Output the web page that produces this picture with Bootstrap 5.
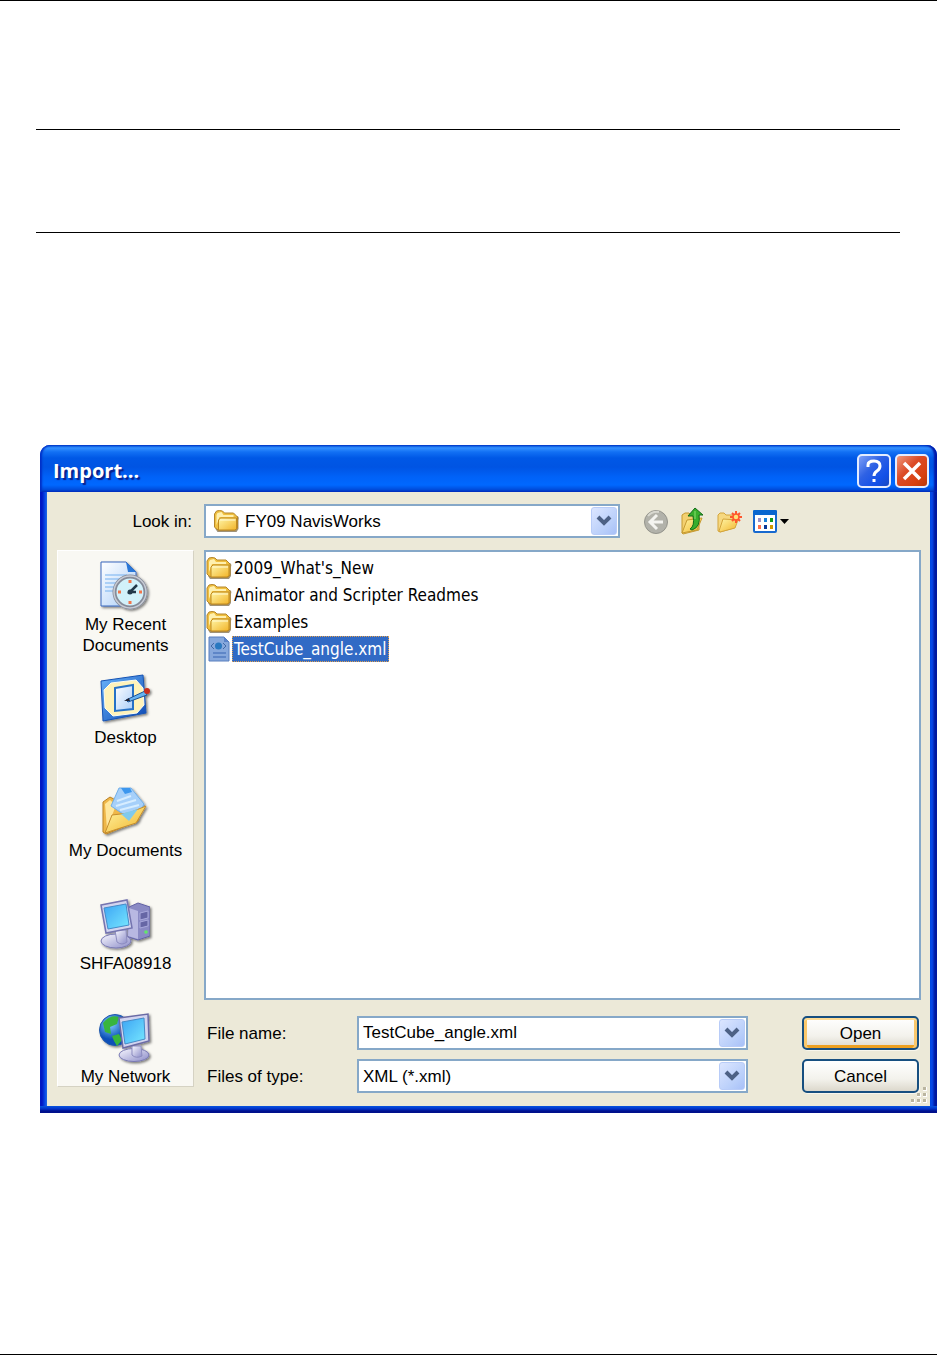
<!DOCTYPE html>
<html lang="en">
<head>
<meta charset="utf-8">
<meta name="viewport" content="width=device-width, initial-scale=1">
<title>Import</title>
<link href="https://cdn.jsdelivr.net/npm/bootstrap@5.3.0/dist/css/bootstrap.min.css" rel="stylesheet">
<style>
body { font-family: "Liberation Sans", Arial, sans-serif; font-size: 17px; line-height: 21px; color: #000; background: #fff; }
.sheet { min-height: 100vh; border-top: 1px solid #000; border-bottom: 1px solid #000; }
.note-box { height: 104px; margin: 128px 37px 212px 36px; border-top: 1px solid #000; border-bottom: 1px solid #000; }
.dialog-window { margin-left: 40px; border-radius: 10px 10px 0 0; padding: 0 7px 7px;
  background: linear-gradient(to top, #00108c 0 2px, #0030c8 4px, #0855e0 7px, transparent 7px), linear-gradient(90deg, #0018c4 0 2px, #0848e8 5px, #2068e0 7px, #0048e0 8px calc(100% - 7px), #0848e8 calc(100% - 5px), #0018a0 calc(100% - 2px)); }
.title-strip { height: 47px; margin: 0 -7px; padding: 1px 8px 0 13px; border-radius: 10px 10px 0 0;
  background: linear-gradient(#0050d8 0, #3490ff 3px, #1270f4 7px, #0058e6 13px, #0054e3 22px, #0062f8 32px, #0068ff 40px, #0050e0 44px, #0038c0 47px); box-shadow: inset 2px 0 2px #0030c8, inset -3px 0 2px #0018a8; }
.title-strip h1 { font: bold 20px/24px "Open Sans", "Noto Sans", sans-serif; color: #fff; text-shadow: 2px 2px 1px #08208c; }
.caption-btn { width: 34px; height: 34px; padding: 0; border: 2px solid #e4ecff; border-radius: 5px; background: linear-gradient(135deg, #7ea0f8, #2f62e4 40%, #1250e8 75%, #1848c0); }
.caption-btn.close-x { background: linear-gradient(135deg, #f0987c, #dc4c28 40%, #d84010 75%, #b83808); }
.caption-btn svg, .tool-btn svg, .drop svg { display: block; margin: auto; }
.client { background: #ece9d8; padding: 12px 9px 13px 10px; position: relative; }
.lookup-row { margin-bottom: 12px; }
.lookup-label { width: 147px; padding-right: 12px; text-align: right; }
.combo { position: relative; border: 2px solid #86a8c8; background: #fff; height: 34px; }
.combo.lookup { flex: 0 1 416px; }
.combo select, .combo input { appearance: none; border: 0; background: transparent; width: 100%; height: 100%; padding: 0 34px 0 4px; color: #000; outline: 0; display: block; }
.combo.lookup select { padding-left: 39px; }
.combo .folder-mark { position: absolute; left: 7px; top: 3px; pointer-events: none; }
.drop { position: absolute; right: 1px; top: 1px; bottom: 1px; width: 26px; padding: 0; border: 1px solid #b8ccf8; border-radius: 3px; background: linear-gradient(135deg, #dce6ff, #b8cefa 70%, #a8c0f8); display: flex; align-items: center; }
span.drop { pointer-events: none; }
.tools { margin-left: 21px; gap: 9px; }
.tool-btn { border: 0; padding: 0; background: none; }
.places { flex: 0 0 137px; background: #f9f8f3; border: 1px solid #fff; border-right-color: #d5d2c3; border-bottom-color: #d5d2c3; height: 537px; overflow: hidden; padding-top: 9px; }
.place { display: block; height: 113px; text-align: center; color: #000; text-decoration: none; }
.place svg { display: block; margin: 0 auto 4px; padding-right: 4px; box-sizing: content-box; }
.listing { margin-left: 10px; min-width: 0; }
.file-list { border: 2px solid #86a8c8; background: #fff; height: 450px; padding: 2px 0; font-family: "DejaVu Sans Condensed", "DejaVu Sans", sans-serif; font-size: 17px; }
.file-list a { height: 27px; color: #000; text-decoration: none; }
.file-list .fname { padding: 0 2px 0 1px; border: 1px solid transparent; line-height: 24px; }
.file-list .chosen .fname { background: #316ac5; color: #fff; border: 1px dotted #e0a050; }
.entry { padding: 16px 2px 0 3px; gap: 9px; }
.entry-label { width: 150px; flex-shrink: 0; }
.cmd { width: 117px; height: 34px; margin-left: 54px; padding: 0; border: 2px solid #174f80; border-radius: 5px; color: #000; background: linear-gradient(#fff, #f3f2ec 60%, #dcd8cc); flex-shrink: 0; box-shadow: 1px 1px 0 #f8f6ec; }
.cmd.primary-cmd { box-shadow: inset 0 2px 0 #ffdc94, inset 3px 0 0 #fac86c, inset -3px 0 0 #fac86c, inset 0 -3px 0 #eda020, 1px 1px 0 #f8f6ec; }
.resize-grip { position: absolute; right: 1px; bottom: 1px; }
</style>
</head>
<body>
<svg width="0" height="0" class="position-absolute" aria-hidden="true">
  <defs>
    <linearGradient id="gold" x1="0" y1="0" x2="1" y2="1"><stop stop-color="#fff6a8"/><stop offset="1" stop-color="#f2b428"/></linearGradient>
    <linearGradient id="screen" x1="0" y1="0" x2="1" y2="1"><stop stop-color="#3ca4f4"/><stop offset="1" stop-color="#78e8ff"/></linearGradient>
    <linearGradient id="paper" x1="0" y1="0" x2="1" y2="1"><stop stop-color="#fff"/><stop offset="1" stop-color="#a9cdf8"/></linearGradient>
    <linearGradient id="metal" x1="0" y1="0" x2="1" y2="1"><stop stop-color="#f8f8ff"/><stop offset="1" stop-color="#8c8cc8"/></linearGradient>
    <linearGradient id="royal" x1="0" y1="0" x2="1" y2="1"><stop stop-color="#69b4fa"/><stop offset="1" stop-color="#0c48b4"/></linearGradient>
    <radialGradient id="earth" cx=".35" cy=".3"><stop stop-color="#86d0ff"/><stop offset="1" stop-color="#0c50b8"/></radialGradient>
    <filter id="shade" x="-20%" y="-20%" width="150%" height="150%"><feDropShadow dx="1.5" dy="1.5" stdDeviation="1" flood-opacity=".5"/></filter>
    <symbol id="folder" viewBox="0 0 26 24">
      <path d="M4 23L2 20V7H24Q26 8 25 11V20L23 23Z" fill="#6b5730" opacity=".65"/>
      <path d="M3 20L1 18V5L3 2Q6 1 9 2L11 4H20L22 6L24 8V19L22 21H5Z" fill="#f0c040" stroke="#b5862a"/>
      <path d="M3 6L4 4L8 3L10 6H20V8H6L3 16Z" fill="#fff0ae"/>
      <path d="M5 11L7 9H23V20L21 21H5Z" fill="url(#gold)" stroke="#c08a20"/>
      <path d="M6.500 11H22" stroke="#fffbd8"/>
    </symbol>
    <symbol id="chevron" viewBox="0 0 16 12"><path d="M2 2L8 8L14 2" fill="none" stroke="#4d6185" stroke-width="4"/></symbol>
  </defs>
</svg>

<main class="sheet">
  <div class="note-box"></div>

  <section class="dialog-window" aria-labelledby="dialogTitle">
    <header class="title-strip d-flex align-items-center">
      <h1 id="dialogTitle" class="m-0 me-auto pt-1">Import...</h1>
      <div class="d-flex gap-1 pt-1">
        <button type="button" class="caption-btn" aria-label="Help"><svg width="24" height="26" viewBox="0 0 24 26" fill="none" stroke="#fff" stroke-width="3"><path d="M6 9V7Q6 3 12 3T18 8Q18 11 15 13T12 18"/><path d="M12 21V24"/></svg></button>
        <button type="button" class="caption-btn close-x" aria-label="Close"><svg width="24" height="24" viewBox="0 0 24 24" stroke="#fff" stroke-width="3.5"><path d="M4 4L20 20M20 4L4 20"/></svg></button>
      </div>
    </header>

    <form class="client" onsubmit="return false">
      <div class="lookup-row d-flex align-items-center">
        <label class="lookup-label" for="lookIn">Look in:</label>
        <div class="combo lookup">
          <svg class="folder-mark" width="27" height="24"><use href="#folder"/></svg>
          <select id="lookIn"><option>FY09 NavisWorks</option></select>
          <span class="drop"><svg width="16" height="12"><use href="#chevron"/></svg></span>
        </div>
        <div class="tools d-flex align-items-center">
          <button type="button" class="tool-btn" aria-label="Back"><svg width="28" height="28" viewBox="0 0 28 28"><circle cx="15" cy="15" r="11.5" fill="#b2b2aa" stroke="#94948c"/><path d="M7 9Q11 4 18 5" stroke="#d8d8d0" stroke-width="2" fill="none"/><path d="M22 15H10M16 8L9 15L16 22" fill="none" stroke="#f4f4f0" stroke-width="3"/></svg></button>
          <button type="button" class="tool-btn" aria-label="Up one level"><svg width="28" height="28" viewBox="0 0 28 28"><path d="M4 26V8L7 6H11L13 8H21V23L5 27Z" fill="#f3d070" stroke="#c69a30"/><path d="M4 26L9 13L24 11L19 23Z" fill="url(#gold)" stroke="#c69a30"/><path d="M12 22Q17 19 15 9H10L17 1L25 8H21Q23 20 14 23Z" fill="#38ae2c" stroke="#126c18"/><path d="M17 4V12" stroke="#8be070"/></svg></button>
          <button type="button" class="tool-btn" aria-label="Create new folder"><svg width="28" height="28" viewBox="0 0 28 28"><path d="M3 24V8L5 6H9L11 8H19V21L5 25Z" fill="#f6d880" stroke="#d4a53c"/><path d="M4 24L8 12L23 13L20 21L5 25Z" fill="url(#gold)" stroke="#d4a53c"/><path d="M21 4V16M15 10H27M17 6L25 14M25 6L17 14" stroke="#ff572e" stroke-width="2"/><circle cx="21" cy="10" r="3" fill="#ffe278" stroke="#ff572e" stroke-width="1.5"/></svg></button>
          <button type="button" class="tool-btn" aria-label="View menu"><svg width="38" height="28" viewBox="0 0 38 28"><rect x="2" y="4" width="22" height="21" rx="1" fill="#fff" stroke="#1769cf" stroke-width="2"/><path d="M1 4Q1 3 3 3H23Q25 3 25 4V8H1Z" fill="#0866cf"/><path d="M6 11h3v4H6z" fill="#9890c8"/><path d="M12 11h3v4h-3z" fill="#1880d8"/><path d="M18 11h3v4h-3z" fill="#109818"/><path d="M6 18h3v4H6z" fill="#ff704c"/><path d="M12 18h3v4h-3z" fill="#083898"/><path d="M18 18h3v4h-3z" fill="#d09800"/><path d="M28 12H37L32.500 17Z"/></svg></button>
        </div>
      </div>

      <div class="d-flex">
        <nav class="places" aria-label="Places">
          <a class="place" href="#"><svg width="52" height="50" viewBox="0 0 52 50" filter="url(#shade)"><path d="M3 2H28L38 12V46H3Z" fill="url(#paper)" stroke="#3967bd"/><path d="M28 2L30 12H38Z" fill="#2a78d8"/><path d="M7 15H29M7 19H29M7 23H29M7 27H29M7 31H29" stroke="#74b1f0"/><circle cx="32" cy="32" r="15.5" fill="#d2f1fa" stroke="#858b99" stroke-width="4"/><circle cx="32" cy="32" r="16" fill="none" stroke="#c8ccd5" stroke-width="1.5"/><path d="M32 20V23M32 41V44M20 32H23M41 32H44" stroke="#f3744a" stroke-width="3"/><path d="M39 25L32 32H38" stroke="#23394a" stroke-width="2.5" fill="none"/><circle cx="32" cy="32" r="2.5" fill="#23394a"/></svg>My Recent<br>Documents</a>
          <a class="place" href="#"><svg width="52" height="50" viewBox="0 0 52 50" filter="url(#shade)"><path d="M3 8L45 2L48 40L5 48Z" fill="url(#royal)" stroke="#1753b3"/><path d="M13 10L38 7L45 15L46 32L39 40L15 43L7 35L6 17Z" fill="#fff3ba" stroke="#fdfdf0"/><path d="M17 15L35 12V36L17 38Z" fill="url(#paper)" stroke="#2872c6" stroke-width="2"/><path d="M28 27L47 18L49 22L30 29Z" fill="#65b3f2" stroke="#1d5292"/><path d="M26 28L31 25L32 28Z" fill="#223"/><circle cx="49" cy="18" r="3" fill="#c92f1d"/></svg>Desktop</a>
          <a class="place" href="#"><svg width="52" height="50" viewBox="0 0 52 50" filter="url(#shade)"><path d="M5 46V16L12 11L21 16V22L44 19L40 35L8 48Z" fill="#efb74a" stroke="#ba8224"/><path d="M7 18L12 14L18 19L9 43Z" fill="#ffe79c"/><path d="M21 2H33L46 18L42 26L28 30L13 20Z" fill="#a6d0fa" stroke="#72afe8"/><path d="M23 2H32L34 6L27 8Z" fill="#3d97ee"/><path d="M19 15L33 10M18 20L38 14M22 24L41 19" stroke="#d7edff" stroke-width="2"/><path d="M7 47L14 29L31 27L48 20L38 37Z" fill="url(#gold)" stroke="#c58d2d"/><path d="M23 28L40 23L31 35Z" fill="#80caed"/></svg>My Documents</a>
          <a class="place" href="#"><svg width="52" height="50" viewBox="0 0 52 50" filter="url(#shade)"><path d="M31 8L40 4L52 8V37L40 41L30 38Z" fill="#8a8ac4" stroke="#6464a5"/><path d="M31 9L40 12V40L30 37Z" fill="#b8b8e2"/><path d="M42 14L50 12V19L42 21ZM42 23L50 21V27L42 29Z" fill="#6666a5" stroke="#aaaadd"/><circle cx="48" cy="33" r="1.8" fill="#61e967"/><ellipse cx="18" cy="42" rx="15" ry="7" fill="url(#metal)" stroke="#7979b3"/><path d="M17 31H28L29 43Q24 47 19 43Z" fill="url(#metal)" stroke="#8b8bbf"/><path d="M3 6L29 1L34 29L8 34Z" fill="#d2d4ef" stroke="#7474b0" stroke-width="1.5"/><path d="M6 9L28 5L31 26L10 30Z" fill="url(#screen)" stroke="#458bc8"/></svg>SHFA08918</a>
          <a class="place" href="#"><svg width="52" height="50" viewBox="0 0 52 50" filter="url(#shade)"><circle cx="17" cy="18" r="15.5" fill="url(#earth)" stroke="#2058ac"/><path d="M5 11Q12 2 21 5L19 12L12 15L13 22L7 20Z M14 24L21 22L24 28L19 34L16 29Z M23 5L30 10L24 14Z" fill="#39b53d"/><ellipse cx="36" cy="43" rx="15" ry="6.5" fill="url(#metal)" stroke="#7979b3"/><path d="M34 34H43L44 44Q38 47 34 43Z" fill="url(#metal)" stroke="#8b8bbf"/><path d="M21 6L50 2L51 29L25 36Z" fill="#d2d4ef" stroke="#6b6ba5" stroke-width="1.5"/><path d="M24 10L46 6L47 27L27 32Z" fill="url(#screen)" stroke="#458bc8"/></svg>My Network</a>
        </nav>

        <div class="listing flex-fill">
          <div class="file-list">
            <a href="#" class="d-flex align-items-center"><svg width="26" height="24"><use href="#folder"/></svg><span class="fname">2009_What's_New</span></a>
            <a href="#" class="d-flex align-items-center"><svg width="26" height="24"><use href="#folder"/></svg><span class="fname">Animator and Scripter Readmes</span></a>
            <a href="#" class="d-flex align-items-center"><svg width="26" height="24"><use href="#folder"/></svg><span class="fname">Examples</span></a>
            <a href="#" class="d-flex align-items-center chosen"><svg width="26" height="26" viewBox="0 0 26 26"><path d="M3 1H18L23 6V25H3Z" fill="#86a8dc" stroke="#587fbe"/><path d="M18 1V6H23Z" fill="#5b84c9"/><path d="M8 7L5 10L8 13M17 7L20 10L17 13" fill="none" stroke="#4268a4"/><circle cx="12.500" cy="10" r="3.500" fill="#2878c0"/><path d="M7 17H20M7 21H20" stroke="#527bc0" stroke-width="1.5"/></svg><span class="fname">TestCube_angle.xml</span></a>
          </div>
          <div class="entry d-flex flex-column">
            <div class="d-flex align-items-center">
              <label class="entry-label" for="fileName">File name:</label>
              <div class="combo flex-fill"><input id="fileName" type="text" value="TestCube_angle.xml"><button type="button" class="drop" aria-label="Show recent names"><svg width="16" height="12"><use href="#chevron"/></svg></button></div>
              <button type="submit" class="cmd primary-cmd">Open</button>
            </div>
            <div class="d-flex align-items-center">
              <label class="entry-label" for="fileType">Files of type:</label>
              <div class="combo flex-fill"><select id="fileType"><option>XML (*.xml)</option></select><span class="drop"><svg width="16" height="12"><use href="#chevron"/></svg></span></div>
              <button type="button" class="cmd">Cancel</button>
            </div>
          </div>
        </div>
      </div>
      <svg class="resize-grip" width="20" height="20" viewBox="0 0 20 20"><path d="M14 2h4v4h-4zM14 8h4v4h-4zM14 14h4v4h-4zM8 8h4v4H8zM8 14h4v4H8zM2 14h4v4H2z" fill="#fff"/><path d="M14 2h3v3h-3zM14 8h3v3h-3zM14 14h3v3h-3zM8 8h3v3H8zM8 14h3v3H8zM2 14h3v3H2z" fill="#bab5a0"/></svg>
    </form>
  </section>
</main>
<script src="https://cdn.jsdelivr.net/npm/bootstrap@5.3.0/dist/js/bootstrap.bundle.min.js"></script>
</body>
</html>
